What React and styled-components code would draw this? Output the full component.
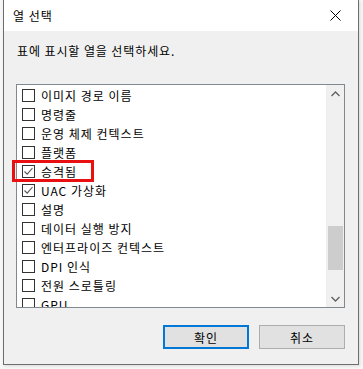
import React from 'react'
import styled, { createGlobalStyle } from 'styled-components'

const GlobalStyle = createGlobalStyle`
  html, body {
    margin: 0;
    padding: 0;
    background: #f7f7f7;
  }
  body {
    font-family: "Noto Sans CJK KR", "Noto Sans", sans-serif;
    font-size: 12px;
    color: #000;
  }
`

const Page = styled.div`
  position: relative;
  width: 363px;
  height: 369px;
  overflow: hidden;
`
const Window = styled.div`
  margin-left: 3px;
  width: 354px;
  height: 364px;
  border: 1px solid #6e6e6e;
  border-top: none;
  background: #f0f0f0;
  display: flex;
  flex-direction: column;
  box-shadow: 1px 1px 3px rgba(0, 0, 0, 0.12);
`
const TitleBar = styled.div`
  height: 31px;
  background: #fff;
  display: flex;
  align-items: center;
  justify-content: space-between;
  padding-left: 9px;
`
const Title = styled.span`
  font-size: 12px;
  letter-spacing: 1px;
`
const CloseButton = styled.div`
  width: 46px;
  height: 31px;
  display: flex;
  align-items: center;
  justify-content: center;
`
const Body = styled.div`
  flex: 1;
  padding: 11px 13px 0 12px;
  display: flex;
  flex-direction: column;
`
const Description = styled.div`
  font-size: 12px;
  height: 18px;
  padding-left: 1px;
  letter-spacing: 0.9px;
`
const ListBox = styled.div`
  margin-top: 24px;
  height: 222px;
  border: 1px solid #828790;
  background: #fff;
  display: flex;
  overflow: hidden;
`
const Items = styled.div`
  flex: 1;
  padding-top: 1px;
  padding-left: 5px;
`
const Row = styled.div`
  height: 19px;
  display: flex;
  align-items: center;
  gap: 6px;
  white-space: nowrap;
  letter-spacing: 1px;
`
const Box = styled.span`
  box-sizing: border-box;
  width: 13px;
  height: 13px;
  border: 1px solid #333;
  background: #fff;
  display: flex;
  align-items: center;
  justify-content: center;
  flex-shrink: 0;
`
const ScrollBar = styled.div`
  width: 17px;
  background: #f0f0f0;
  border-left: 1px solid #e8eef4;
  display: flex;
  flex-direction: column;
  align-items: center;
`
const Arrow = styled.div`
  height: 17px;
  width: 17px;
  display: flex;
  align-items: center;
  justify-content: center;
`
const Track = styled.div`
  flex: 1;
  width: 100%;
  display: flex;
  flex-direction: column;
  align-items: center;
  padding-top: 124px;
`
const Thumb = styled.div`
  width: 15px;
  height: 44px;
  background: #cdcdcd;
`
const Footer = styled.div`
  display: flex;
  justify-content: flex-end;
  gap: 10px;
  margin-top: 17px;
`
const Button = styled.div`
  box-sizing: border-box;
  width: 86px;
  height: 24px;
  background: #e1e1e1;
  border: ${p => (p.$primary ? '2px solid #0078d7' : '1px solid #adadad')};
  display: flex;
  align-items: center;
  justify-content: center;
  font-size: 12px;
  letter-spacing: 1px;
`
const Highlight = styled.div`
  position: absolute;
  left: 12px;
  top: 160px;
  width: 76px;
  height: 16px;
  border: 3px solid #e81010;
`

const items = [
  { label: '이미지 경로 이름' },
  { label: '명령줄' },
  { label: '운영 체제 컨텍스트' },
  { label: '플랫폼' },
  { label: '승격됨', checked: true },
  { label: 'UAC 가상화', checked: true },
  { label: '설명' },
  { label: '데이터 실행 방지' },
  { label: '엔터프라이즈 컨텍스트' },
  { label: 'DPI 인식' },
  { label: '전원 스로틀링' },
  { label: 'GPU' }
]

const Check = () => (
  <svg width='11' height='11' viewBox='0 0 11 11'>
    <path d='M1.5 5.5 L4.2 8.2 L9.5 2' fill='none' stroke='#555' strokeWidth='1.1' />
  </svg>
)

const App = () => (
  <Page>
    <GlobalStyle />
    <Window>
      <TitleBar>
        <Title>열 선택</Title>
        <CloseButton>
          <svg width='11' height='11' viewBox='0 0 11 11'>
            <path d='M0.5 0.5 L10.5 10.5 M10.5 0.5 L0.5 10.5' stroke='#000' strokeWidth='1' />
          </svg>
        </CloseButton>
      </TitleBar>
      <Body>
        <Description>표에 표시할 열을 선택하세요.</Description>
        <ListBox>
          <Items>
            {items.map(item => (
              <Row key={item.label}>
                <Box>{item.checked && <Check />}</Box>
                <span>{item.label}</span>
              </Row>
            ))}
          </Items>
          <ScrollBar>
            <Arrow>
              <svg width='9' height='6' viewBox='0 0 9 6'>
                <path d='M0.5 5 L4.5 1 L8.5 5' fill='none' stroke='#606060' strokeWidth='1.3' />
              </svg>
            </Arrow>
            <Track>
              <Thumb />
            </Track>
            <Arrow>
              <svg width='9' height='6' viewBox='0 0 9 6'>
                <path d='M0.5 1 L4.5 5 L8.5 1' fill='none' stroke='#606060' strokeWidth='1.3' />
              </svg>
            </Arrow>
          </ScrollBar>
        </ListBox>
        <Footer>
          <Button $primary>확인</Button>
          <Button>취소</Button>
        </Footer>
      </Body>
    </Window>
    <Highlight />
  </Page>
)

export default App
